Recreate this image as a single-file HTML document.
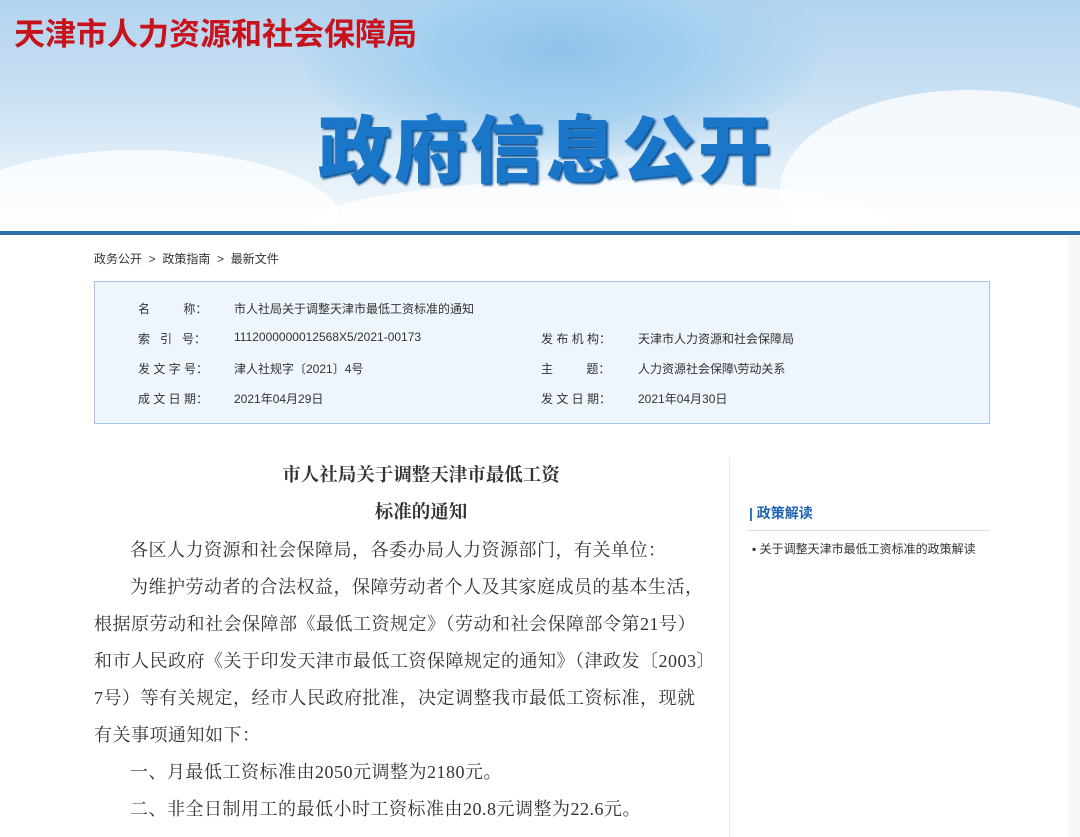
<!DOCTYPE html>
<html><head><meta charset="utf-8"><style>
body{margin:0;width:1080px;height:837px;overflow:hidden;background:#fff;font-family:"Liberation Sans","Noto Sans CJK SC",sans-serif;position:relative}
.hd{position:absolute;left:0;top:0;width:1080px;height:232px;background:linear-gradient(180deg,#b3d3ee 0%,#c8e0f3 40%,#e4f0f9 75%,#f4f8fb 100%);overflow:hidden}
.rose{position:absolute;left:300px;top:-60px;width:520px;height:220px;border-radius:50%;background:radial-gradient(ellipse at center,#8ec3ea 0%,#a9d2f0 45%,rgba(190,220,243,0) 75%)}
.cloud{position:absolute;border-radius:50%;background:rgba(255,255,255,.75)}
.t1{position:absolute;left:14px;top:9px;font-size:31px;font-weight:bold;color:#c8121c;letter-spacing:0;font-family:"Noto Sans CJK SC",sans-serif}
.t2{position:absolute;left:318px;top:100px;font-size:73px;font-weight:900;color:#1a76c9;letter-spacing:3px;font-family:"Noto Sans CJK SC",sans-serif;line-height:90px;text-shadow:2px 2px 2px #0d4f8f}
.line{position:absolute;left:0;top:231px;width:1080px;height:4px;background:#2e6ea9}
.bc{position:absolute;left:94px;top:250px;font-size:12px;color:#333}
.box{position:absolute;left:94px;top:281px;width:894px;height:141px;background:#eef5fc;border:1px solid #a7c3e3}
.r{position:absolute;font-size:12px;color:#333;white-space:nowrap}
.art{position:absolute;left:94px;top:458px;width:654px;font-family:"Liberation Serif","Noto Serif CJK SC",serif;font-size:18px;letter-spacing:0.5px;color:#333}
.art .h{text-align:center;font-weight:bold;font-size:18.5px;line-height:37px;letter-spacing:0}
.art p{margin:0;line-height:37px;text-indent:36px;white-space:nowrap}
.vl{position:absolute;left:729px;top:458px;width:1px;height:379px;background:#e6e6e6}
.sb{position:absolute;left:749px;top:503px;font-size:14px;font-weight:bold;color:#1f64b0}
.sbl{position:absolute;left:747px;top:530px;width:243px;height:1px;background:#ddd}
.si{position:absolute;left:752px;top:540px;font-size:12px;color:#333}
.edge{position:absolute;left:1068px;top:235px;width:12px;height:602px;background:#f7f7f7}
</style></head><body>
<div class="hd">
<div class="rose"></div>
<div class="cloud" style="left:-60px;top:150px;width:400px;height:140px"></div>
<div class="cloud" style="left:780px;top:90px;width:380px;height:200px"></div>
<div class="cloud" style="left:300px;top:180px;width:600px;height:100px"></div>
<div class="t1">天津市人力资源和社会保障局</div>
<div class="t2">政府信息公开</div>
</div>
<div class="line"></div>
<div class="edge"></div>
<div class="bc">政务公开 &nbsp;&gt;&nbsp; 政策指南 &nbsp;&gt;&nbsp; 最新文件</div>
<div class="box"></div>
<div class="r" style="left:138px;top:300px">名&nbsp;&nbsp;&nbsp;&nbsp;&nbsp;&nbsp;&nbsp;&nbsp;&nbsp;&nbsp;称：</div>
<div class="r" style="left:234px;top:300px">市人社局关于调整天津市最低工资标准的通知</div>
<div class="r" style="left:138px;top:330px">索&nbsp;&nbsp;&nbsp;引&nbsp;&nbsp;&nbsp;号：</div>
<div class="r" style="left:234px;top:330px">1112000000012568X5/2021-00173</div>
<div class="r" style="left:541px;top:330px">发 布 机 构：</div>
<div class="r" style="left:638px;top:330px">天津市人力资源和社会保障局</div>
<div class="r" style="left:138px;top:360px">发 文 字 号：</div>
<div class="r" style="left:234px;top:360px">津人社规字〔2021〕4号</div>
<div class="r" style="left:541px;top:360px">主&nbsp;&nbsp;&nbsp;&nbsp;&nbsp;&nbsp;&nbsp;&nbsp;&nbsp;&nbsp;题：</div>
<div class="r" style="left:638px;top:360px">人力资源社会保障\劳动关系</div>
<div class="r" style="left:138px;top:390px">成 文 日 期：</div>
<div class="r" style="left:234px;top:390px">2021年04月29日</div>
<div class="r" style="left:541px;top:390px">发 文 日 期：</div>
<div class="r" style="left:638px;top:390px">2021年04月30日</div>
<div class="art">
<div class="h">市人社局关于调整天津市最低工资</div>
<div class="h">标准的通知</div>
<p>各区人力资源和社会保障局，各委办局人力资源部门，有关单位：</p>
<p>为维护劳动者的合法权益，保障劳动者个人及其家庭成员的基本生活，</p>
<p style="text-indent:0">根据原劳动和社会保障部《最低工资规定》（劳动和社会保障部令第21号）</p>
<p style="text-indent:0">和市人民政府《关于印发天津市最低工资保障规定的通知》（津政发〔2003〕</p>
<p style="text-indent:0">7号）等有关规定，经市人民政府批准，决定调整我市最低工资标准，现就</p>
<p style="text-indent:0">有关事项通知如下：</p>
<p>一、月最低工资标准由2050元调整为2180元。</p>
<p>二、非全日制用工的最低小时工资标准由20.8元调整为22.6元。</p>
</div>
<div class="vl"></div>
<div class="sb">| 政策解读</div>
<div class="sbl"></div>
<div class="si">▪ 关于调整天津市最低工资标准的政策解读</div>
</body></html>
